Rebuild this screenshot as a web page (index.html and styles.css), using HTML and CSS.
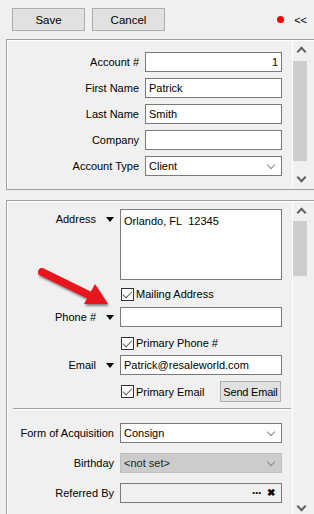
FILE: index.html
```html
<!DOCTYPE html>
<html lang="en">
<head>
    <meta charset="UTF-8">
    <meta name="viewport" content="width=device-width, initial-scale=1.0">
    <title>Customer Detail</title>
    <link rel="stylesheet" href="styles.css">
</head>
<body>
    <div class="toolbar">
        <button class="btn btn-wide">Save</button>
        <button class="btn btn-wide">Cancel</button>
        <span class="status-dot"></span>
        <span class="collapse">&lt;&lt;</span>
    </div>

    <div class="panel panel-top">
        <div class="panel-body">
            <div class="form-grid">
                <label>Account #</label>
                <div class="field num">1</div>
                <label>First Name</label>
                <div class="field">Patrick</div>
                <label>Last Name</label>
                <div class="field">Smith</div>
                <label>Company</label>
                <div class="field"></div>
                <label>Account Type</label>
                <div class="field select">Client<span class="chev"></span></div>
            </div>
        </div>
        <div class="scrollbar">
            <span class="sb-up"></span>
            <div class="sb-track"><div class="sb-thumb thumb-top"></div></div>
            <span class="sb-down"></span>
        </div>
    </div>

    <div class="panel panel-bottom">
        <div class="panel-body">
            <div class="row row-address">
                <div class="label">Address<span class="tri"></span></div>
                <div class="field area">Orlando, FL&nbsp; 12345</div>
            </div>
            <div class="row row-check gap-4">
                <div class="label"></div>
                <div class="check"><span class="box"></span>Mailing Address</div>
            </div>
            <div class="row gap-3">
                <div class="label">Phone #<span class="tri"></span></div>
                <div class="field"></div>
            </div>
            <div class="row row-check gap-6">
                <div class="label"></div>
                <div class="check"><span class="box"></span>Primary Phone #</div>
            </div>
            <div class="row gap-2">
                <div class="label">Email<span class="tri"></span></div>
                <div class="field">Patrick@resaleworld.com</div>
            </div>
            <div class="row gap-6">
                <div class="label"></div>
                <div class="check-line">
                    <div class="check"><span class="box"></span>Primary Email</div>
                    <button class="btn btn-small">Send Email</button>
                </div>
            </div>
            <div class="separator"></div>
            <div class="row gap-13">
                <div class="label">Form of Acquisition</div>
                <div class="field select">Consign<span class="chev"></span></div>
            </div>
            <div class="row gap-10">
                <div class="label">Birthday</div>
                <div class="field select disabled">&lt;not set&gt;<span class="chev"></span></div>
            </div>
            <div class="row gap-10">
                <div class="label">Referred By</div>
                <div class="field lookup"><span class="dots">&middot;&middot;&middot;</span><span class="clear">&#10006;</span></div>
            </div>
        </div>
        <div class="scrollbar">
            <span class="sb-up"></span>
            <div class="sb-track"><div class="sb-thumb thumb-bottom"></div></div>
            <span class="sb-down"></span>
        </div>
    </div>

    <svg class="pointer" width="80" height="50" viewBox="34 264 80 50">
        <line x1="42" y1="272" x2="91" y2="296" stroke="#e8161c" stroke-width="8" stroke-linecap="round"/>
        <polygon points="108,304 84,304 95,284" fill="#e8161c"/>
    </svg>
</body>
</html>
```

FILE: styles.css
```css
body {
    font-family: "Liberation Sans", Arial, sans-serif;
    font-size: 11px;
    color: #000;
    margin: 0;
    padding: 0;
    width: 314px;
    height: 514px;
    overflow: hidden;
    position: relative;
    background-color: #f0f0f0;
}

.toolbar {
    display: flex;
    align-items: center;
    height: 39px;
    padding-left: 12px;
    box-sizing: border-box;
}

.btn {
    font-family: inherit;
    font-size: 11.5px;
    color: #000;
    background-color: #e1e1e1;
    border: 1px solid #adadad;
    padding: 0;
    margin: 0;
}

.btn-wide {
    width: 73px;
    height: 23px;
    margin-right: 7px;
}

.btn-small {
    font-size: 11px;
    letter-spacing: -0.2px;
    width: 61px;
    height: 21px;
    margin-right: 1px;
    white-space: nowrap;
}

.status-dot {
    width: 7px;
    height: 7px;
    border-radius: 50%;
    background-color: #f00;
    margin-left: auto;
    margin-right: 10px;
}

.collapse {
    font-size: 11px;
    margin-right: 7px;
}

.panel {
    display: flex;
    width: 320px;
    margin-left: 6px;
    border: 1px solid #a0a0a0;
    box-shadow: inset 1px 1px 0 #fff;
    box-sizing: border-box;
}

.panel-top {
    height: 151px;
}

.panel-bottom {
    margin-top: 10px;
    height: 320px;
}

.panel-body {
    width: 285px;
    flex: none;
}

.panel-top .panel-body {
    padding-top: 12px;
}

.panel-bottom .panel-body {
    padding-top: 8px;
}

.form-grid {
    display: grid;
    grid-template-columns: 132px 137px;
    column-gap: 6px;
    row-gap: 6px;
}

.form-grid label {
    text-align: right;
    line-height: 20px;
}

.field {
    height: 20px;
    box-sizing: border-box;
    border: 1px solid #7a7a7a;
    background: #fff;
    line-height: 18px;
    padding: 0 3px;
    position: relative;
    white-space: nowrap;
}

.num {
    text-align: right;
}

.select {
    padding-right: 20px;
}

.chev {
    position: absolute;
    right: 7px;
    top: 5px;
    width: 5px;
    height: 5px;
    border-right: 1px solid #8a8a8a;
    border-bottom: 1px solid #8a8a8a;
    transform: rotate(45deg);
}

.disabled {
    background: #cccccc;
    border-color: #bfbfbf;
    color: #222;
}

.lookup {
    background: #f0f0f0;
    display: flex;
    justify-content: flex-end;
    align-items: center;
    gap: 6px;
    padding-right: 6px;
}

.dots {
    font-size: 12px;
    font-weight: bold;
    letter-spacing: -1px;
    line-height: 10px;
}

.clear {
    font-size: 10px;
    font-weight: bold;
}

.row {
    display: grid;
    grid-template-columns: 107px 162px;
    column-gap: 6px;
    min-height: 20px;
}

.gap-2 { margin-top: 2px; }
.gap-3 { margin-top: 3px; }
.gap-4 { margin-top: 4px; }
.gap-6 { margin-top: 6px; }
.gap-10 { margin-top: 10px; }
.gap-13 { margin-top: 13px; }

.label {
    display: flex;
    justify-content: flex-end;
    align-items: center;
    line-height: 20px;
    height: 20px;
    white-space: nowrap;
}

.tri {
    width: 0;
    height: 0;
    border-left: 4px solid transparent;
    border-right: 4px solid transparent;
    border-top: 5px solid #000;
    margin-left: 10px;
}

.area {
    height: 71px;
    line-height: 18px;
    padding-top: 2px;
}

.check {
    display: flex;
    align-items: center;
    height: 20px;
    padding-left: 1px;
}

.box {
    width: 13px;
    height: 13px;
    box-sizing: border-box;
    border: 1px solid #333;
    background: #fff;
    margin-right: 2px;
    position: relative;
}

.box::after {
    content: "";
    position: absolute;
    left: 3px;
    top: 0px;
    width: 4px;
    height: 8px;
    border-right: 1px solid #5a5a5a;
    border-bottom: 1px solid #5a5a5a;
    transform: rotate(45deg);
}

.check-line {
    display: flex;
    justify-content: space-between;
    align-items: center;
}

.separator {
    margin: 6px 0 0 6px;
    width: 278px;
    border-top: 1px solid #a0a0a0;
    border-bottom: 1px solid #fff;
}

.scrollbar {
    width: 16px;
    border-left: 1px solid #fff;
    display: flex;
    flex-direction: column;
    align-items: center;
    padding: 6px 0 0;
}

.sb-track {
    flex: 1;
    width: 100%;
    margin: 5px 0 5px;
}

.sb-thumb {
    width: 14px;
    background: #cdcdcd;
}

.thumb-top {
    margin-top: 1px;
    height: 100px;
}

.thumb-bottom {
    height: 55px;
}

.sb-up,
.sb-down {
    width: 5px;
    height: 5px;
    border-left: 2px solid #606060;
    border-top: 2px solid #606060;
    transform: rotate(45deg);
}

.sb-up {
    margin-top: 2px;
}

.sb-down {
    transform: rotate(225deg);
    margin-bottom: 8px;
}

.panel-bottom .sb-down {
    margin-bottom: 9px;
}

.pointer {
    position: absolute;
    left: 34px;
    top: 264px;
    filter: drop-shadow(1px 2px 1px rgba(0, 0, 0, 0.45));
}
```
